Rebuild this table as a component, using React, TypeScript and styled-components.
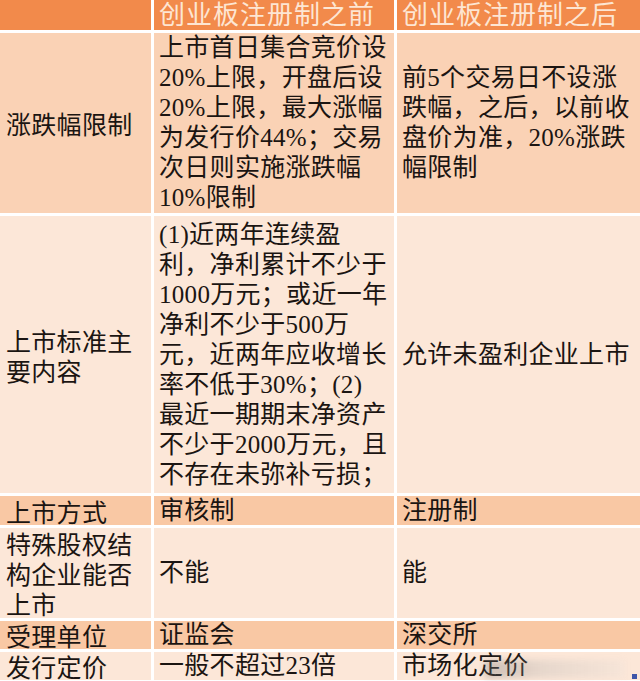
import React from "react";
import styled, { createGlobalStyle } from "styled-components";

const GlobalStyle = createGlobalStyle`
  html, body {
    margin: 0;
    padding: 0;
    background: #ffffff;
  }
`;

type Tone = "mid" | "light" | "dark";

const toneColor: Record<Tone, string> = {
  mid: "#fad2b5",
  light: "#fce7d8",
  dark: "#f9c8a4",
};

const Frame = styled.div`
  position: relative;
  width: 640px;
  height: 681px;
  overflow: hidden;
  background: #ffffff;
`;

const Table = styled.div`
  display: grid;
  grid-template-columns: 151px 240px 1fr;
  grid-template-rows: 30px 180px 277px 29px 90px 28px 28px;
  gap: 3px 3px;
  width: 640px;
`;

const HeadCell = styled.div`
  background: #f28a4b;
  color: #fde6d3;
  display: flex;
  align-items: flex-end;
  padding: 0 4px 0 5px;
  font-family: "Liberation Serif", "Noto Sans CJK SC", serif;
  font-size: 26px;
  line-height: 28px;
  letter-spacing: 1px;
  white-space: nowrap;
`;

const Cell = styled.div<{ $tone: Tone; $compact?: boolean }>`
  background: ${(p) => toneColor[p.$tone]};
  color: #1b1512;
  display: flex;
  align-items: center;
  padding: 0 2px 0 5px;
  font-family: "Liberation Serif", "Noto Sans CJK SC", serif;
  font-size: 25px;
  line-height: ${(p) => (p.$compact ? "26px" : "30px")};
  letter-spacing: 0.3px;
  white-space: pre;
`;

const Label = styled(Cell)`
  font-family: "Noto Sans CJK SC", sans-serif;
  font-weight: 400;
  padding-left: 6px;
`;

const Watermark = styled.div`
  position: absolute;
  left: 485px;
  top: 660px;
  width: 140px;
  height: 18px;
  background: linear-gradient(
    90deg,
    rgba(120, 120, 120, 0.35),
    rgba(170, 170, 170, 0.25) 40%,
    rgba(220, 220, 220, 0.15)
  );
  filter: blur(3px);
`;

const Corner = styled.div`
  position: absolute;
  right: 3px;
  bottom: 2px;
  width: 5px;
  height: 5px;
  background: #3f56a8;
`;

type Row = {
  label: string;
  before: string;
  after: string;
  tone: Tone;
  compact?: boolean;
};

const rows: Row[] = [
  {
    label: "涨跌幅限制",
    before:
      "上市首日集合竞价设\n20%上限，开盘后设\n20%上限，最大涨幅\n为发行价44%；交易\n次日则实施涨跌幅\n10%限制",
    after: "前5个交易日不设涨\n跌幅，之后，以前收\n盘价为准，20%涨跌\n幅限制",
    tone: "mid",
  },
  {
    label: "上市标准主\n要内容",
    before:
      "(1)近两年连续盈\n利，净利累计不少于\n1000万元；或近一年\n净利不少于500万\n元，近两年应收增长\n率不低于30%；(2)\n最近一期期末净资产\n不少于2000万元，且\n不存在未弥补亏损；",
    after: "允许未盈利企业上市",
    tone: "light",
  },
  { label: "上市方式", before: "审核制", after: "注册制", tone: "dark", compact: true },
  {
    label: "特殊股权结\n构企业能否\n上市",
    before: "不能",
    after: "能",
    tone: "light",
  },
  { label: "受理单位", before: "证监会", after: "深交所", tone: "dark", compact: true },
  {
    label: "发行定价",
    before: "一般不超过23倍",
    after: "市场化定价",
    tone: "light",
    compact: true,
  },
];

export default function App() {
  return (
    <Frame>
      <GlobalStyle />
      <Table>
        <HeadCell />
        <HeadCell>创业板注册制之前</HeadCell>
        <HeadCell>创业板注册制之后</HeadCell>
        {rows.map((r) => (
          <React.Fragment key={r.label}>
            <Label $tone={r.tone} $compact={r.compact}>
              {r.label}
            </Label>
            <Cell $tone={r.tone} $compact={r.compact}>
              {r.before}
            </Cell>
            <Cell $tone={r.tone} $compact={r.compact}>
              {r.after}
            </Cell>
          </React.Fragment>
        ))}
      </Table>
      <Watermark />
      <Corner />
    </Frame>
  );
}
